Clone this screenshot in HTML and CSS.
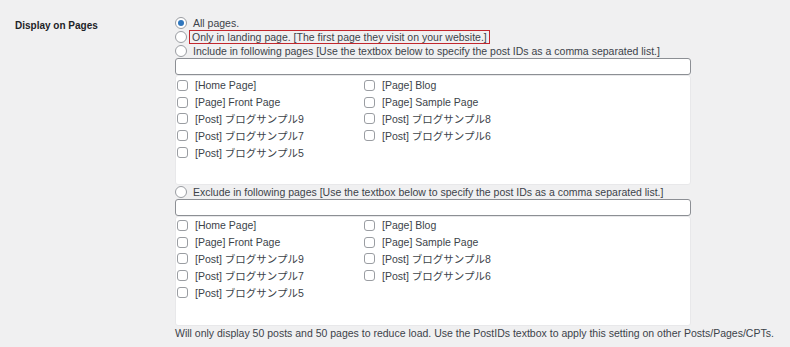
FILE: index.html
```html
<!DOCTYPE html>
<html lang="en">
<head>
<meta charset="utf-8">
<title>Display on Pages</title>
<link rel="stylesheet" href="styles.css">
</head>
<body>
<div class="row">
  <div class="label">Display on Pages</div>
  <div class="field">
    <label class="opt"><span class="radio checked"></span><span class="txt">All pages.</span></label>
    <label class="opt"><span class="radio"></span><span class="txt hl">Only in landing page. [The first page they visit on your website.]</span></label>
    <label class="opt"><span class="radio"></span><span class="txt">Include in following pages [Use the textbox below to specify the post IDs as a comma separated list.]</span></label>
    <div class="input"></div>
    <div class="list">
      <label class="item"><span class="cb"></span>[Home Page]</label>
      <label class="item"><span class="cb"></span>[Page] Blog</label>
      <label class="item"><span class="cb"></span>[Page] Front Page</label>
      <label class="item"><span class="cb"></span>[Page] Sample Page</label>
      <label class="item"><span class="cb"></span>[Post] ブログサンプル9</label>
      <label class="item"><span class="cb"></span>[Post] ブログサンプル8</label>
      <label class="item"><span class="cb"></span>[Post] ブログサンプル7</label>
      <label class="item"><span class="cb"></span>[Post] ブログサンプル6</label>
      <label class="item"><span class="cb"></span>[Post] ブログサンプル5</label>
    </div>
    <label class="opt"><span class="radio"></span><span class="txt">Exclude in following pages [Use the textbox below to specify the post IDs as a comma separated list.]</span></label>
    <div class="input"></div>
    <div class="list second">
      <label class="item"><span class="cb"></span>[Home Page]</label>
      <label class="item"><span class="cb"></span>[Page] Blog</label>
      <label class="item"><span class="cb"></span>[Page] Front Page</label>
      <label class="item"><span class="cb"></span>[Page] Sample Page</label>
      <label class="item"><span class="cb"></span>[Post] ブログサンプル9</label>
      <label class="item"><span class="cb"></span>[Post] ブログサンプル8</label>
      <label class="item"><span class="cb"></span>[Post] ブログサンプル7</label>
      <label class="item"><span class="cb"></span>[Post] ブログサンプル6</label>
      <label class="item"><span class="cb"></span>[Post] ブログサンプル5</label>
    </div>
    <p class="note">Will only display 50 posts and 50 pages to reduce load. Use the PostIDs textbox to apply this setting on other Posts/Pages/CPTs.</p>
  </div>
</div>
</body>
</html>
```
FILE: styles.css
```css
html, body {
  margin: 0;
  padding: 0;
  background: #f0f0f1;
}
body {
  font-family: "Liberation Sans", Arial, "Noto Sans CJK JP", sans-serif;
  font-size: 10.5px;
  color: #3c434a;
}
.row {
  display: flex;
  align-items: flex-start;
}
.label {
  width: 175px;
  box-sizing: border-box;
  padding: 19px 0 0 15px;
  font-weight: 700;
  font-size: 10px;
  color: #1d2327;
  line-height: 14px;
}
.field {
  width: 516px;
  padding-top: 16px;
  display: flex;
  flex-direction: column;
}
.opt {
  display: flex;
  align-items: center;
  height: 14px;
  line-height: 14px;
  white-space: nowrap;
}
.radio {
  width: 12px;
  height: 12px;
  box-sizing: border-box;
  border: 1px solid #9a9da2;
  border-radius: 50%;
  background: #fff;
  margin-right: 6px;
  flex: none;
  position: relative;
}
.radio.checked::after {
  content: "";
  position: absolute;
  left: 2px;
  top: 2px;
  width: 6px;
  height: 6px;
  border-radius: 50%;
  background: #2f76bd;
}
.txt.hl {
  margin-left: -4px;
  padding: 0 2px;
  border: 1.5px solid #c1272d;
  line-height: 12px;
}
.input {
  height: 17px;
  box-sizing: border-box;
  border: 1px solid #8c8f94;
  border-radius: 3px;
  background: #fff;
}
.list {
  height: 110px;
  box-sizing: border-box;
  background: #fff;
  border: 1px solid #e8e8ea;
  border-radius: 3px;
  padding: 1px 0 0 1px;
  display: grid;
  grid-template-columns: 187px 1fr;
  grid-auto-rows: 16.75px;
  align-content: start;
}
.list.second {
  padding-top: 0;
}
.item {
  display: flex;
  align-items: center;
  white-space: nowrap;
}
.cb {
  width: 11px;
  height: 11px;
  box-sizing: border-box;
  border: 1px solid #9a9da2;
  border-radius: 3px;
  background: #fff;
  margin-right: 7px;
  flex: none;
}
.note {
  margin: 0;
  line-height: 14px;
  white-space: nowrap;
}
```
